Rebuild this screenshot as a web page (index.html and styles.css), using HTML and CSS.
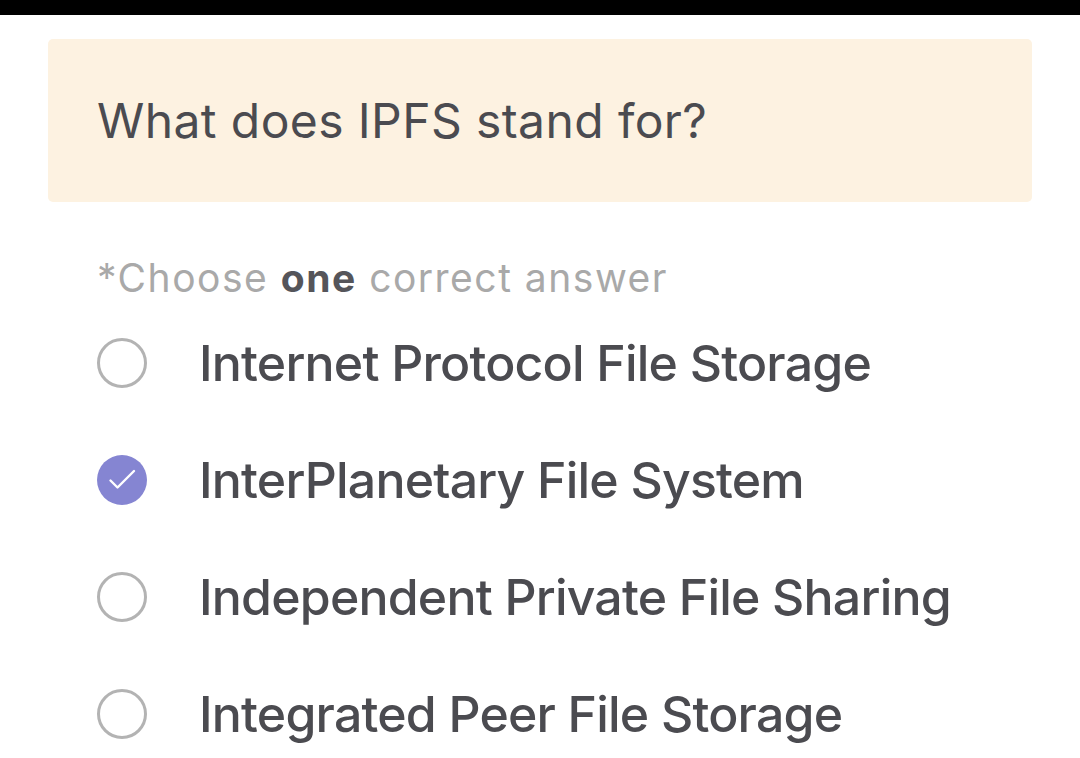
FILE: index.html
```html
<!DOCTYPE html>
<html>
<head>
<meta charset="utf-8">
<link rel="stylesheet" href="styles.css">
</head>
<body>
<div class="topbar"></div>
<main class="page">
  <div class="question-card">
    <h1 class="question">What does IPFS stand for?</h1>
  </div>
  <p class="hint">*Choose <b>one</b> correct answer</p>
  <ul class="options">
    <li class="option"><span class="radio"></span><span class="label">Internet Protocol File Storage</span></li>
    <li class="option selected"><span class="radio">
      <svg viewBox="0 0 50 50" width="50" height="50"><circle cx="25" cy="25" r="25" fill="#8585d2"/><path d="M13.5 25.5 L20.5 32.5 L37 16" fill="none" stroke="#fff" stroke-width="2.4" stroke-linecap="round" stroke-linejoin="round"/></svg>
    </span><span class="label">InterPlanetary File System</span></li>
    <li class="option"><span class="radio"></span><span class="label">Independent Private File Sharing</span></li>
    <li class="option"><span class="radio"></span><span class="label">Integrated Peer File Storage</span></li>
  </ul>
</main>
</body>
</html>
```

FILE: styles.css
```css
* { box-sizing: border-box; }
html, body { margin: 0; padding: 0; background: #ffffff; }
body { font-family: Inter, "Noto Sans", sans-serif; width: 1080px; height: 758px; overflow: hidden; }
.topbar { height: 15px; background: #000; }
.page { padding: 24px 48px 0 48px; }
.question-card {
  height: 163px;
  background: #fdf2e1;
  border-radius: 5px;
  display: flex;
  align-items: center;
  padding-left: 49px;
}
.question {
  margin: 0;
  font-size: 48px;
  font-weight: 400;
  color: #4b4b50;
  letter-spacing: 0.4px;
}
.hint {
  margin: 52px 0 0 49px;
  font-size: 39px;
  color: #a9a9a9;
  letter-spacing: 1.5px;
}
.hint b { color: #55555a; font-weight: 700; }
.options { list-style: none; margin: 3px 0 0 0; padding: 0 0 0 49px; }
.option {
  display: flex;
  align-items: center;
  height: 117px;
}
.radio {
  width: 50px; height: 50px;
  border-radius: 50%;
  border: 3px solid #b3b3b3;
  flex: none;
  display: block;
}
.selected .radio { border: none; }
.selected .radio svg { display: block; }
.label {
  margin-left: 52px;
  font-size: 50px;
  font-weight: 500;
  color: #4b4b50;
  letter-spacing: -0.8px;
}
```
